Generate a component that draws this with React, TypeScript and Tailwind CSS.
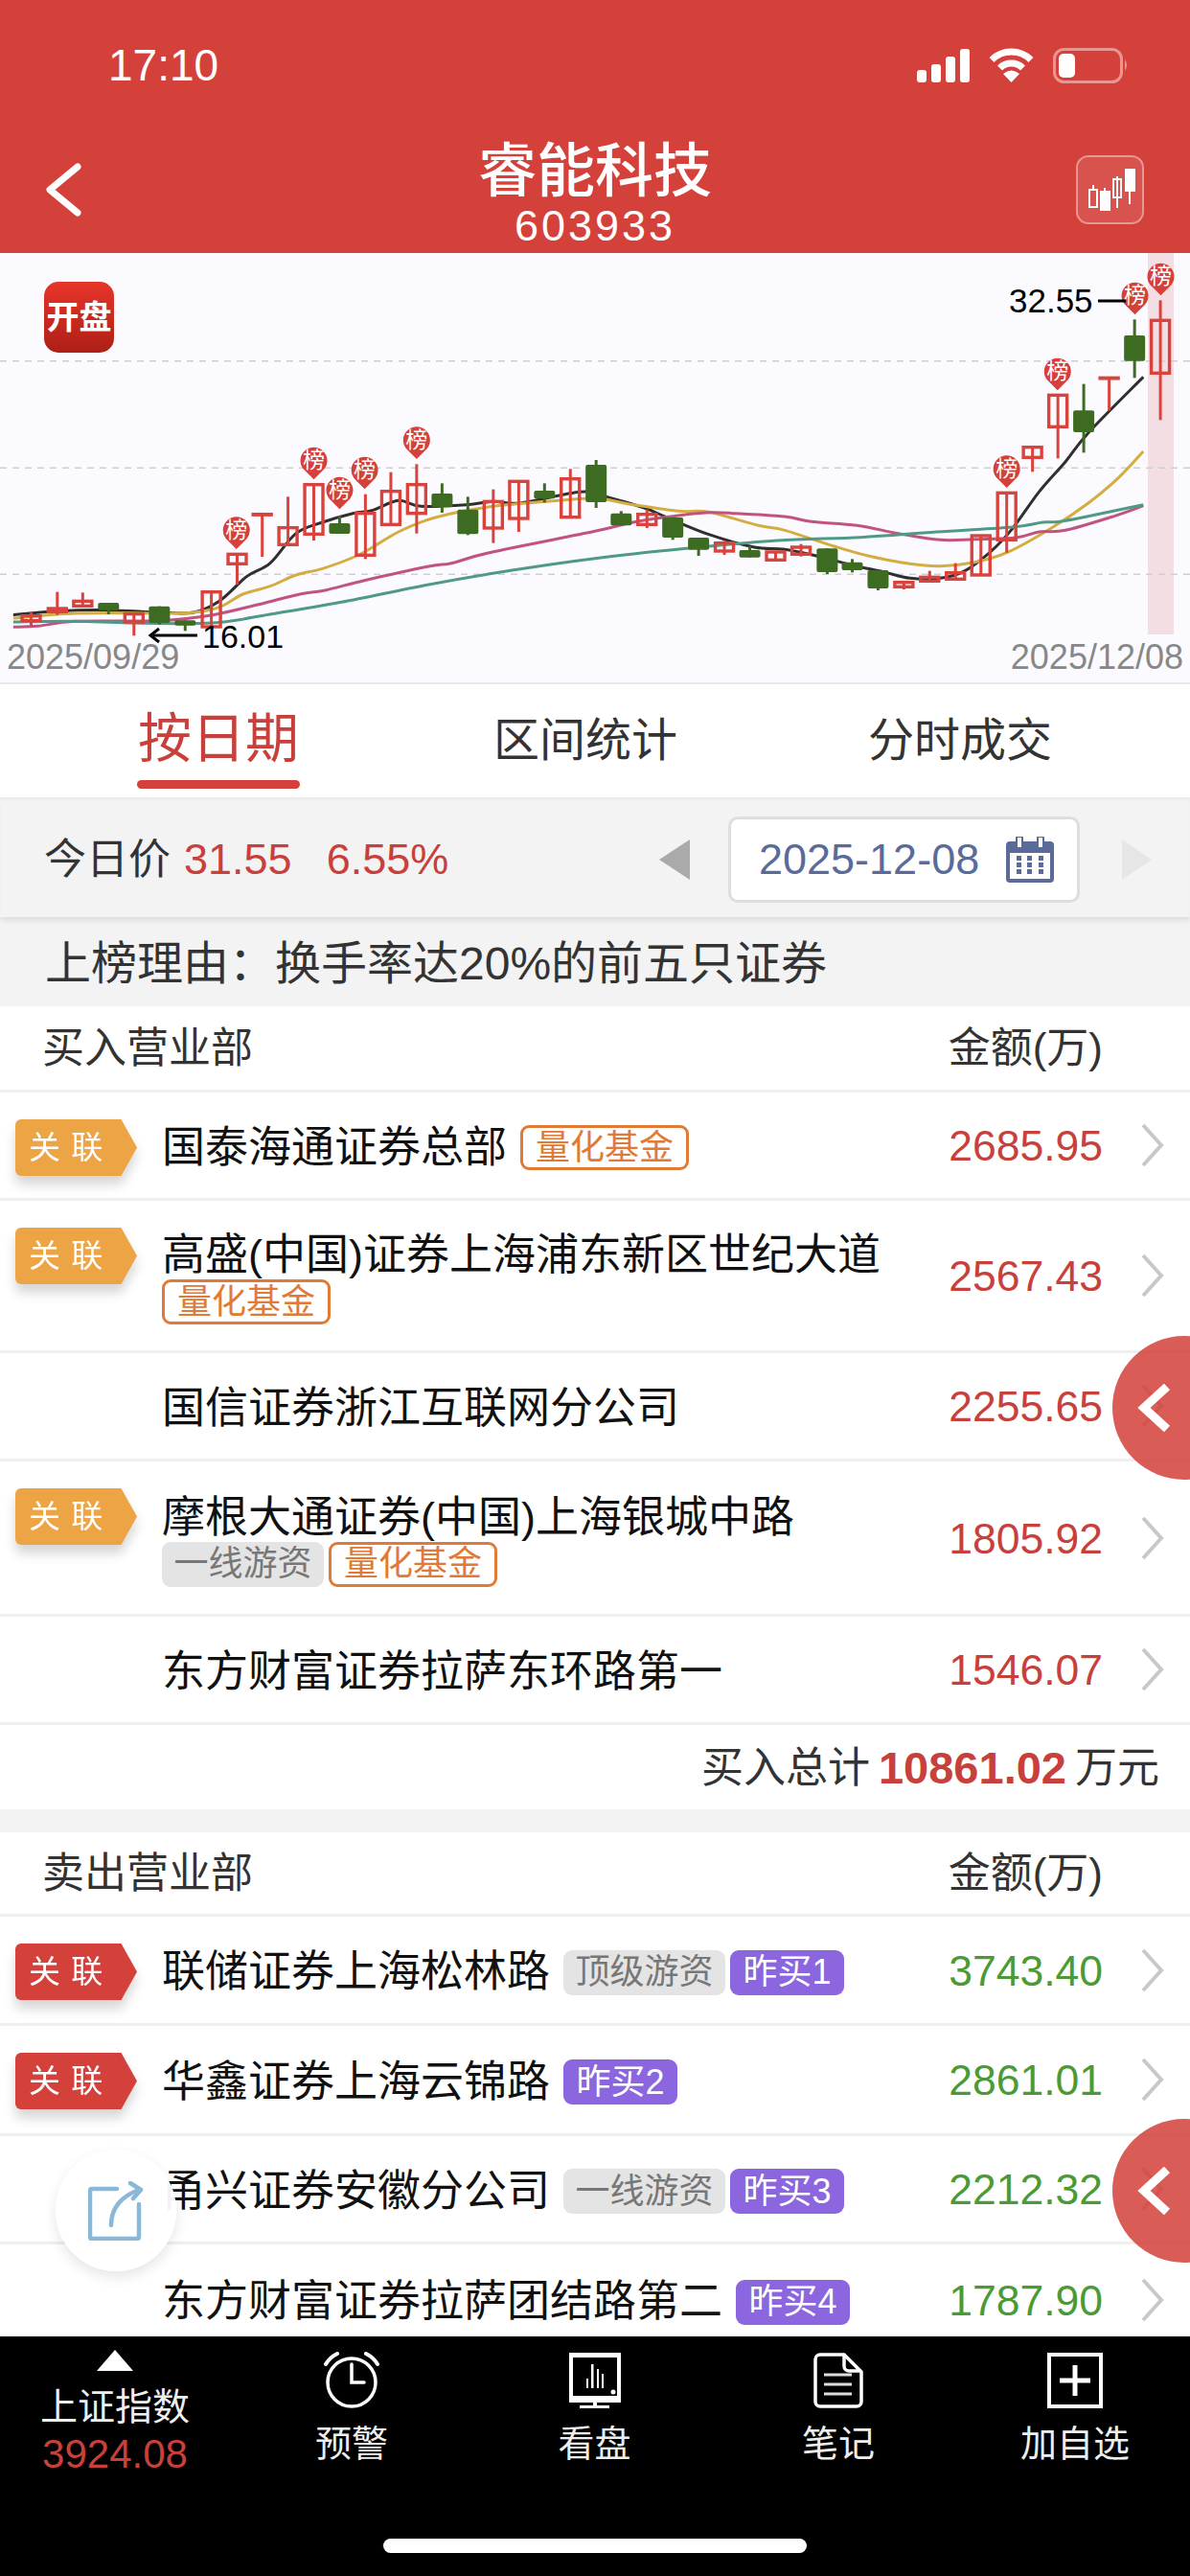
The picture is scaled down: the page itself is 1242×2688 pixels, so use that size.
const RED = '#d4403a'
const GREEN = '#3d6b21'

// chart points are [x, y] read off the picture, scaled by sx / sy below
const sx = (x: number) => x / 2.525
const sy = (y: number) => 1 + y / 3

type Candle = [number, number, number, number, number, boolean]

const candles: Candle[] = [
  [82, 1120, 1165, 1133, 1148, true],
  [151, 1058, 1130, 1110, 1120, true],
  [218, 1060, 1102, 1087, 1102, true],
  [286, 1092, 1128, 1092, 1115, false],
  [353, 1127, 1195, 1127, 1152, true],
  [420, 1103, 1160, 1103, 1155, false],
  [488, 1147, 1180, 1147, 1163, false],
  [557, 1058, 1167, 1058, 1167, true],
  [625, 940, 1035, 940, 970, true],
  [691, 815, 948, 815, 815, true],
  [759, 760, 910, 857, 910, true],
  [827, 722, 897, 722, 877, true],
  [895, 820, 876, 843, 876, false],
  [963, 752, 955, 812, 943, true],
  [1030, 683, 847, 743, 847, true],
  [1098, 658, 875, 722, 812, true],
  [1165, 718, 810, 750, 793, false],
  [1233, 760, 880, 800, 877, false],
  [1300, 737, 905, 775, 858, true],
  [1367, 708, 870, 712, 828, true],
  [1435, 718, 778, 741, 766, false],
  [1503, 673, 824, 704, 824, true],
  [1571, 645, 795, 660, 777, false],
  [1637, 805, 850, 812, 850, false],
  [1705, 800, 858, 815, 847, true],
  [1773, 825, 895, 825, 888, false],
  [1841, 888, 945, 888, 926, false],
  [1909, 898, 942, 905, 930, true],
  [1976, 915, 950, 927, 950, false],
  [2044, 933, 958, 933, 958, true],
  [2111, 908, 947, 918, 940, true],
  [2180, 922, 1002, 922, 996, false],
  [2246, 955, 997, 965, 990, false],
  [2314, 990, 1053, 990, 1047, false],
  [2382, 1028, 1050, 1028, 1042, true],
  [2450, 992, 1024, 1012, 1024, true],
  [2518, 968, 1018, 998, 1018, true],
  [2585, 882, 1005, 882, 1005, true],
  [2653, 748, 935, 748, 895, true],
  [2721, 605, 682, 605, 637, true],
  [2788, 442, 640, 442, 541, true],
  [2856, 407, 622, 490, 558, false],
  [2923, 388, 490, 388, 388, true],
  [2990, 205, 388, 255, 335, false],
  [3058, 145, 520, 208, 373, true],
]

const pins: [number, number][] = [
  [623, 822], [827, 604], [895, 697], [961, 634], [1098, 540],
  [2653, 630], [2787, 325], [2991, 88], [3059, 28],
]

const maLines: { color: string; pts: number[][] }[] = [
  {
    color: '#2f2f2f',
    pts: [[35, 1130], [150, 1118], [285, 1115], [420, 1122], [510, 1122], [580, 1085], [650, 1010], [712, 968], [780, 875], [850, 840], [930, 812], [980, 803], [1050, 772], [1110, 790], [1230, 785], [1300, 775], [1370, 780], [1530, 745], [1598, 760], [1698, 795], [1758, 825], [1868, 878], [1988, 918], [2068, 925], [2168, 950], [2248, 975], [2328, 995], [2398, 1015], [2478, 1015], [2538, 995], [2608, 935], [2668, 860], [2738, 745], [2808, 650], [2868, 560], [3013, 385]],
  },
  {
    color: '#d4ad3f',
    pts: [[35, 1140], [200, 1125], [420, 1125], [510, 1122], [580, 1105], [640, 1065], [712, 1040], [780, 1005], [850, 985], [940, 945], [1000, 905], [1050, 870], [1120, 835], [1200, 810], [1300, 790], [1440, 775], [1568, 765], [1668, 785], [1788, 805], [1868, 808], [1998, 850], [2068, 865], [2198, 915], [2288, 945], [2398, 970], [2478, 977], [2568, 965], [2653, 935], [2768, 860], [2868, 780], [2948, 700], [3013, 618]],
  },
  {
    color: '#c2527f',
    pts: [[35, 1168], [100, 1165], [200, 1150], [420, 1148], [560, 1130], [712, 1088], [790, 1065], [860, 1052], [960, 1022], [1130, 978], [1190, 968], [1290, 935], [1568, 868], [1668, 840], [1768, 822], [1858, 810], [1938, 812], [2068, 822], [2138, 838], [2258, 850], [2368, 875], [2478, 895], [2568, 893], [2678, 888], [2738, 870], [2808, 865], [2938, 820], [3013, 788]],
  },
  {
    color: '#4f9a87',
    pts: [[35, 1152], [200, 1150], [340, 1155], [560, 1155], [712, 1128], [900, 1090], [1130, 1035], [1350, 990], [1568, 953], [1808, 922], [2048, 897], [2268, 887], [2468, 870], [2668, 855], [2748, 840], [2808, 835], [3013, 785]],
  },
]

function smooth(pts: number[][]) {
  const p = pts.map(([x, y]) => [sx(x), sy(y)])
  let d = `M${p[0][0]} ${p[0][1]}`
  for (let i = 0; i < p.length - 1; i++) {
    const a = p[i - 1] ?? p[i]
    const b = p[i]
    const c = p[i + 1]
    const e = p[i + 2] ?? c
    d += ` C${b[0] + (c[0] - a[0]) / 6} ${b[1] + (c[1] - a[1]) / 6} ${c[0] - (e[0] - b[0]) / 6} ${c[1] - (e[1] - b[1]) / 6} ${c[0]} ${c[1]}`
  }
  return d
}

function KLine() {
  return (
    <svg viewBox="0 0 1242 448" className="block h-[448px] w-[1242px]">
      <rect x={sx(3025)} y="0" width="27" height="398" fill="#f3dfe3" />
      {[335, 670, 1003].map((y) => (
        <line key={y} x1="0" x2="1242" y1={sy(y)} y2={sy(y)} stroke="#cfcfcf" strokeWidth="1.5" strokeDasharray="7 6" />
      ))}
      {maLines.map((l) => (
        <path key={l.color} d={smooth(l.pts)} fill="none" stroke={l.color} strokeWidth="3" strokeLinejoin="round" />
      ))}
      {candles.map(([x, wt, wb, bt, bb, up]) => {
        const c = up ? '#d9433d' : GREEN
        const cx = sx(x)
        return (
          <g key={x}>
            <line x1={cx} x2={cx} y1={sy(wt)} y2={sy(wb)} stroke={c} strokeWidth="3" />
            {up ? (
              <rect x={cx - 9.5} y={sy(bt)} width="19" height={Math.max(sy(bb) - sy(bt), 0.5)} fill="none" stroke={c} strokeWidth="3.4" />
            ) : (
              <rect x={cx - 11} y={sy(bt)} width="22" height={sy(bb) - sy(bt)} rx="2" fill={c} />
            )}
          </g>
        )
      })}
      {pins.map(([x, y]) => {
        const cx = sx(x)
        const top = sy(y)
        return (
          <g key={x}>
            <path d={`M${cx} ${top + 34} L${cx - 11} ${top + 23} A14 14 0 1 1 ${cx + 11} ${top + 23} Z`} fill={RED} />
            <text x={cx} y={top + 22} textAnchor="middle" fontSize="23" fill="#fff">榜</text>
          </g>
        )
      })}
      <line x1="160" x2="206" y1="399" y2="399" stroke="#000" strokeWidth="3" />
      <path d="M166 392 L157 399 L166 406" fill="none" stroke="#000" strokeWidth="3" />
      <text x="211" y="412" fontSize="34" fill="#000">16.01</text>
      <text x="1053" y="62" fontSize="35" fill="#000">32.55</text>
      <line x1="1146" x2="1175" y1="50" y2="50" stroke="#000" strokeWidth="3" />
      <text x="7" y="434" fontSize="36" fill="#888">2025/09/29</text>
      <text x="1235" y="434" fontSize="36" fill="#888" textAnchor="end">2025/12/08</text>
    </svg>
  )
}

function StatusIcons() {
  return (
    <div className="flex items-center gap-[20px] pr-[64px]">
      <svg width="55" height="35" viewBox="0 0 55 35" fill="#fff">
        <rect x="0" y="22" width="10" height="13" rx="3" />
        <rect x="15" y="16" width="10" height="19" rx="3" />
        <rect x="30" y="8" width="10" height="27" rx="3" />
        <rect x="45" y="0" width="10" height="35" rx="3" />
      </svg>
      <svg width="47" height="36" viewBox="0 0 47 36" fill="none" stroke="#fff" strokeWidth="7">
        <path d="M3 12.5 A29 29 0 0 1 44 12.5" />
        <path d="M11.5 21 A17 17 0 0 1 35.5 21" />
        <path d="M23.5 36 L15 27 Q23.5 20 32 27 Z" fill="#fff" stroke="none" />
      </svg>
      <svg width="79" height="37" viewBox="0 0 79 37" fill="none">
        <rect x="1.5" y="1.5" width="70" height="34" rx="10" stroke="#ffffff" strokeOpacity="0.45" strokeWidth="3" />
        <rect x="6" y="6" width="17" height="25" rx="5" fill="#fff" />
        <path d="M75 12 Q79 18 75 24 Z" fill="#ffffff" fillOpacity="0.45" />
      </svg>
    </div>
  )
}

function CandleButton() {
  return (
    <div className="h-[72px] w-[71px] rounded-[13px] border-2 border-white/40 bg-white/10">
      <svg width="67" height="68" viewBox="0 0 67 68" fill="none" stroke="#fff" strokeWidth="2">
        <rect x="12" y="34" width="8" height="18" />
        <line x1="16" x2="16" y1="29" y2="34" />
        <rect x="24" y="36" width="9" height="19" fill="#fff" />
        <line x1="28" x2="28" y1="32" y2="36" />
        <rect x="37" y="23" width="8" height="19" />
        <line x1="41" x2="41" y1="20" y2="53" />
        <rect x="50" y="13" width="9" height="22" fill="#fff" />
        <line x1="54" x2="54" y1="35" y2="49" />
      </svg>
    </div>
  )
}

function CalendarIcon() {
  return (
    <svg width="50" height="48" viewBox="0 0 50 48" className="ml-[28px]">
      <rect x="0" y="5" width="50" height="43" rx="4" fill="#5a6b9a" />
      <rect x="4" y="17" width="42" height="27" fill="#fff" />
      <rect x="11" y="0" width="6" height="12" fill="#fff" stroke="#5a6b9a" strokeWidth="2" />
      <rect x="33" y="0" width="6" height="12" fill="#fff" stroke="#5a6b9a" strokeWidth="2" />
      {[11, 22, 34].map((x) =>
        [20, 27, 34].map((y) => <rect key={`${x}-${y}`} x={x} y={y} width="5" height="5" fill="#5a6b9a" />),
      )}
    </svg>
  )
}

function Tag({ kind, children }: { kind: 'quant' | 'gray' | 'purple'; children: string }) {
  if (kind === 'quant') {
    return <span className="flex h-[47px] w-[176px] items-center justify-center rounded-[9px] border-[3px] border-[#e07a35] text-[36px] leading-none text-[#e07a35]">{children}</span>
  }
  if (kind === 'gray') {
    return <span className="flex h-[47px] w-[169px] items-center justify-center rounded-[9px] bg-[#e4e4e4] text-[36px] leading-none text-[#777]">{children}</span>
  }
  return <span className="flex h-[47px] w-[119px] items-center justify-center rounded-[9px] bg-[#8b66de] text-[36px] leading-none text-white">{children}</span>
}

type RowProps = {
  name: string
  amount: string
  h: string
  badge?: 'orange' | 'red'
  tags?: ['quant' | 'gray' | 'purple', string][]
  sell?: boolean
}

function Row({ name, amount, h, badge, tags = [], sell }: RowProps) {
  return (
    <div className={`flex shrink-0 items-center border-b-[3px] border-[#efefef] pr-[27px] ${h}`}>
      <div className="w-[169px] shrink-0 self-start pt-[28px] pl-[16px]">
        {badge && (
          <div className="w-[127px] drop-shadow-[0_9px_6px_rgba(0,0,0,0.16)]">
            <div className={`flex h-[59px] items-center rounded-l-[6px] pl-[14px] text-[33px] tracking-[1px] text-white [clip-path:polygon(0_0,87%_0,100%_50%,87%_100%,0_100%)] ${badge === 'orange' ? 'bg-[#eda444]' : 'bg-[#d4403a]'}`}>
              关 联
            </div>
          </div>
        )}
      </div>
      <div className="flex w-[791px] flex-wrap items-center gap-x-[14px] pt-[5px] text-[45px] leading-[50px] text-[#111]">
        <span>{name}</span>
        {tags.length > 0 && (
          <span className="flex gap-[5px]">
            {tags.map(([kind, text]) => (
              <Tag key={text} kind={kind}>{text}</Tag>
            ))}
          </span>
        )}
      </div>
      <div className={`flex-1 pt-[3px] text-right text-[44.5px] ${sell ? 'text-[#4c9a35]' : 'text-[#c8403c]'}`}>{amount}</div>
      <svg width="25" height="46" viewBox="0 0 25 46" fill="none" stroke="#c8c8c8" strokeWidth="4" className="ml-[39px] shrink-0">
        <path d="M3 2 L22 23 L3 44" />
      </svg>
    </div>
  )
}

function SectionHead({ title, h }: { title: string; h: string }) {
  return (
    <div className={`flex shrink-0 items-center justify-between border-b-[3px] border-[#efefef] pr-[91px] pl-[44px] text-[44px] text-[#333] ${h}`}>
      <span>{title}</span>
      <span>金额(万)</span>
    </div>
  )
}

function FloatArrow({ top }: { top: string }) {
  return (
    <div className={`absolute left-[1161px] flex h-[150px] w-[150px] items-center rounded-full bg-[#d4403a]/85 pl-[26px] ${top}`}>
      <svg width="36" height="50" viewBox="0 0 36 50" fill="none" stroke="#fff" strokeWidth="9">
        <path d="M31 3 L7 25 L31 47" />
      </svg>
    </div>
  )
}

function TabItem({ label, children }: { label: string; children: React.ReactNode }) {
  return (
    <div className="flex flex-col items-center pt-[17px]">
      <div className="flex h-[57px] items-center">{children}</div>
      <div className="mt-[16px] text-[38px] leading-[44px] text-[#eee]">{label}</div>
    </div>
  )
}

export default function App() {
  return (
    <div className="relative flex h-[2688px] w-[1242px] flex-col overflow-hidden bg-white font-['Liberation_Sans','Noto_Sans_CJK_SC',sans-serif]">
      <header className="h-[264px] shrink-0 bg-[#d4403a] text-white">
        <div className="flex h-[136px] items-center justify-between pl-[113px]">
          <span className="text-[46px] leading-none">17:10</span>
          <StatusIcons />
        </div>
        <div className="grid h-[128px] grid-cols-[1fr_auto_1fr] items-center">
          <svg width="42" height="58" viewBox="0 0 42 58" fill="none" stroke="#fff" strokeWidth="7" strokeLinecap="round" strokeLinejoin="round" className="-mt-[4px] ml-[46px]">
            <path d="M35 5 L6 29 L35 53" />
          </svg>
          <div className="flex flex-col items-center pt-[2px]">
            <div className="text-[61px] leading-[70px] font-medium">睿能科技</div>
            <div className="text-[45px] leading-[44px] tracking-[3px]">603933</div>
          </div>
          <div className="-mt-[4px] flex justify-end pr-[48px]">
            <CandleButton />
          </div>
        </div>
      </header>

      <section className="relative h-[450px] shrink-0 border-b-2 border-[#e8e8e8] bg-[#fbfbff]">
        <KLine />
        <div className="absolute top-[30px] left-[46px] flex h-[74px] w-[73px] items-center justify-center rounded-[15px] bg-gradient-to-b from-[#e8352a] to-[#ad1f17] text-[34px] leading-none font-bold text-white">
          开盘
        </div>
      </section>

      <nav className="flex h-[118px] shrink-0 text-[48px] leading-[60px] text-[#333]">
        <div className="flex w-[456px] flex-col items-center pt-[27px] text-[#c8403c]">
          <span className="text-[56px]">按日期</span>
          <span className="mt-[13px] h-[9px] w-[170px] rounded-full bg-[#d4403a]" />
        </div>
        <div className="w-[310px] pt-[29px] text-center">区间统计</div>
        <div className="w-[472px] pt-[29px] text-center">分时成交</div>
      </nav>

      <div className="z-10 flex h-[125px] shrink-0 items-center bg-[#f3f3f3] pt-[5px] pl-[46px] text-[44px] text-[#333] shadow-[0_3px_6px_rgba(0,0,0,0.1),inset_0_3px_3px_rgba(0,0,0,0.03)]">
        <span>今日价</span>
        <span className="ml-[14px] text-[45px] text-[#c8403c]">31.55</span>
        <span className="ml-[36px] text-[45px] text-[#c8403c]">6.55%</span>
        <div className="ml-auto flex items-center pr-[40px]">
          <div className="h-[42px] w-[32px] bg-[#aaa] [clip-path:polygon(100%_0,100%_100%,0_50%)]" />
          <div className="ml-[40px] flex h-[90px] w-[367px] items-center rounded-[10px] border-[3px] border-[#dedede] bg-white pl-[29px] text-[45px] text-[#5a6b9a]">
            <span>2025-12-08</span>
            <CalendarIcon />
          </div>
          <div className="ml-[44px] h-[42px] w-[31px] bg-[#e6e6e6] [clip-path:polygon(0_0,100%_50%,0_100%)]" />
        </div>
      </div>

      <div className="flex h-[93px] shrink-0 items-center bg-[#f3f3f3] pt-[4px] pl-[47px] text-[48px] text-[#333]">
        上榜理由：换手率达20%的前五只证券
      </div>

      <main className="flex min-h-0 flex-1 flex-col overflow-hidden">
        <SectionHead title="买入营业部" h="h-[90px]" />
        <Row h="h-[113px]" badge="orange" name="国泰海通证券总部" amount="2685.95" tags={[['quant', '量化基金']]} />
        <Row h="h-[159px]" badge="orange" name="高盛(中国)证券上海浦东新区世纪大道" amount="2567.43" tags={[['quant', '量化基金']]} />
        <Row h="h-[113px]" name="国信证券浙江互联网分公司" amount="2255.65" />
        <Row h="h-[162px]" badge="orange" name="摩根大通证券(中国)上海银城中路" amount="1805.92" tags={[['gray', '一线游资'], ['quant', '量化基金']]} />
        <Row h="h-[113px]" name="东方财富证券拉萨东环路第一" amount="1546.07" />
        <div className="flex h-[88px] shrink-0 items-center justify-end gap-[9px] pt-[2px] pr-[32px] text-[44px] text-[#333]">
          <span>买入总计</span>
          <span className="text-[47px] font-bold text-[#c8403c]">10861.02</span>
          <span>万元</span>
        </div>
        <div className="h-[24px] shrink-0 bg-[#f3f3f3]" />
        <SectionHead title="卖出营业部" h="h-[88px]" />
        <Row sell h="h-[114px]" badge="red" name="联储证券上海松林路" amount="3743.40" tags={[['gray', '顶级游资'], ['purple', '昨买1']]} />
        <Row sell h="h-[115px]" badge="red" name="华鑫证券上海云锦路" amount="2861.01" tags={[['purple', '昨买2']]} />
        <Row sell h="h-[113px]" name="甬兴证券安徽分公司" amount="2212.32" tags={[['gray', '一线游资'], ['purple', '昨买3']]} />
        <Row sell h="h-[118px]" name="东方财富证券拉萨团结路第二" amount="1787.90" tags={[['purple', '昨买4']]} />
      </main>

      <footer className="relative flex h-[250px] shrink-0 flex-col bg-black">
        <div className="grid grid-cols-[240px_254px_253px_256px_238px]">
          <div className="flex flex-col items-center pt-[14px]">
            <div className="h-[22px] w-[38px] bg-white [clip-path:polygon(50%_0,100%_100%,0_100%)]" />
            <div className="mt-[16px] text-[39px] leading-[44px] text-[#eee]">上证指数</div>
            <div className="mt-[7px] text-[42px] leading-[40px] text-[#c9403a]">3924.08</div>
          </div>
          <TabItem label="预警">
            <svg width="64" height="60" viewBox="0 0 64 60" fill="none" stroke="#fff" strokeWidth="3.5" strokeLinecap="round">
              <circle cx="32" cy="32" r="25" />
              <path d="M32 13 V32 H45" />
              <path d="M5 13 Q9 6 17 2" strokeWidth="4" />
              <path d="M47 2 Q55 6 59 13" strokeWidth="4" />
            </svg>
          </TabItem>
          <TabItem label="看盘">
            <svg width="56" height="58" viewBox="0 0 56 58" fill="#fff">
              <path fillRule="evenodd" d="M1 0 H55 V52 H1 Z M5 5 V45 H51 V5 Z" />
              <rect x="19" y="27" width="2" height="10" />
              <rect x="24" y="12" width="2.5" height="25" />
              <rect x="30" y="17" width="2" height="20" />
              <rect x="35" y="22" width="2" height="15" />
              <circle cx="47" cy="41" r="2.5" />
              <rect x="26" y="52" width="4" height="3" />
              <rect x="12" y="55" width="31" height="3" />
            </svg>
          </TabItem>
          <TabItem label="笔记">
            <svg width="52" height="58" viewBox="0 0 52 58" fill="none" stroke="#fff" strokeWidth="3.5">
              <path d="M7 2 H32 L50 20 V51 a5 5 0 0 1 -5 5 H7 a5 5 0 0 1 -5 -5 V7 a5 5 0 0 1 5 -5 Z" />
              <path d="M32 2 V14 a5 5 0 0 0 5 5 H50" />
              <path d="M11 23 H40 M11 33 H40 M11 43 H40" strokeWidth="3" stroke="#ddd" />
            </svg>
          </TabItem>
          <TabItem label="加自选">
            <svg width="58" height="58" viewBox="0 0 58 58" fill="none" stroke="#fff">
              <rect x="2" y="2" width="54" height="54" strokeWidth="4" />
              <path d="M13 29 H45 M29 13 V45" strokeWidth="5" />
            </svg>
          </TabItem>
        </div>
        <div className="mx-auto mt-auto mb-[24px] h-[15px] w-[442px] rounded-full bg-white" />
      </footer>

      <FloatArrow top="top-[1394px]" />
      <FloatArrow top="top-[2211px]" />

      <div className="absolute top-[2243px] left-[58px] flex h-[127px] w-[126px] items-center justify-center rounded-full bg-white/95 shadow-[0_6px_14px_rgba(0,0,0,0.1)]">
        <svg width="58" height="62" viewBox="0 0 58 62" fill="none" stroke="#8ab8d8" strokeWidth="4.5" strokeLinecap="round" strokeLinejoin="round">
          <path d="M30 8 H4 Q2 8 2 10 V58 Q2 60 4 60 H51 Q53 60 53 58 V24" />
          <path d="M24 46 C24 30 32 17 53 9" />
          <path d="M44 2 L55 9 L47 18" />
        </svg>
      </div>
    </div>
  )
}
